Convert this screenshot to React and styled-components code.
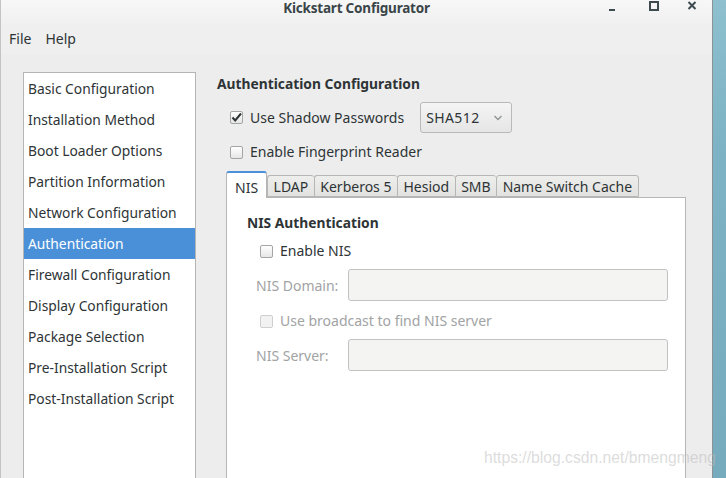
import React from 'react';
import styled, { createGlobalStyle } from 'styled-components';

const GlobalStyle = createGlobalStyle`
  html, body {
    margin: 0;
    padding: 0;
    width: 726px;
    height: 478px;
    overflow: hidden;
    font-family: "Noto Sans", "DejaVu Sans", sans-serif;
    color: #2e3436;
  }
`;

const sections = [
  'Basic Configuration',
  'Installation Method',
  'Boot Loader Options',
  'Partition Information',
  'Network Configuration',
  'Authentication',
  'Firewall Configuration',
  'Display Configuration',
  'Package Selection',
  'Pre-Installation Script',
  'Post-Installation Script',
];

const tabs = ['NIS', 'LDAP', 'Kerberos 5', 'Hesiod', 'SMB', 'Name Switch Cache'];

const Check = ({ checked, disabled }) => (
  <CheckBox disabled={ disabled }>
    { checked && (
      <svg width="13" height="13" viewBox="0 0 13 13">
        <path d="M2.5 6.5 L5.2 9.5 L11 2.5" fill="none" stroke="#2e3436" strokeWidth="2"/>
      </svg>
    ) }
  </CheckBox>
);

const App = () => {
  return ( <Screen>
    <GlobalStyle/>
    <Window>
      <TitleBar>
        <Title>Kickstart Configurator</Title>
        <Controls>
          <Minimize width="8" height="12" viewBox="0 0 8 12">
            <rect x="1" y="9" width="6" height="2" fill="#3d4a50"/>
          </Minimize>
          <svg width="10" height="12" viewBox="0 0 10 12">
            <rect x="1" y="2" width="8" height="8" fill="none" stroke="#3d4a50" strokeWidth="2"/>
          </svg>
          <svg width="10" height="12" viewBox="0 0 10 12">
            <path d="M1.5 2 L8.5 9 M8.5 2 L1.5 9" stroke="#3d4a50" strokeWidth="2"/>
          </svg>
        </Controls>
      </TitleBar>
      <MenuBar>
        <MenuItem>File</MenuItem>
        <MenuItem>Help</MenuItem>
      </MenuBar>
      <Body>
        <Sidebar>
          { sections.map( s => (
            <SideItem key={ s } selected={ s === 'Authentication' }>{ s }</SideItem>
          ) ) }
        </Sidebar>
        <Content>
          <Heading>Authentication Configuration</Heading>
          <ShadowRow>
            <CheckRow>
              <Check checked/>
              <span>Use Shadow Passwords</span>
            </CheckRow>
            <Combo>
              <span>SHA512</span>
              <svg width="10" height="8" viewBox="0 0 10 8">
                <path d="M1.5 2 L5 5.5 L8.5 2" fill="none" stroke="#8e9294" strokeWidth="1.3"/>
              </svg>
            </Combo>
          </ShadowRow>
          <FingerRow>
            <Check/>
            <span>Enable Fingerprint Reader</span>
          </FingerRow>
          <TabBar>
            { tabs.map( t => <Tab key={ t } active={ t === 'NIS' }>{ t }</Tab> ) }
          </TabBar>
          <Panel>
            <PanelHeading>NIS Authentication</PanelHeading>
            <NisToggle>
              <Check/>
              <span>Enable NIS</span>
            </NisToggle>
            <FieldRow>
              <FieldLabel>NIS Domain:</FieldLabel>
              <Field/>
            </FieldRow>
            <BroadcastRow>
              <Check disabled/>
              <span>Use broadcast to find NIS server</span>
            </BroadcastRow>
            <FieldRow>
              <FieldLabel>NIS Server:</FieldLabel>
              <Field/>
            </FieldRow>
          </Panel>
        </Content>
      </Body>
    </Window>
    <Desktop/>
    <Watermark>https://blog.csdn.net/bmengmeng</Watermark>
  </Screen> );
};

export default App;

const Screen = styled.div`
  position: relative;
  display: flex;
  width: 726px;
  height: 478px;
  overflow: hidden;
`;

const Window = styled.div`
  display: flex;
  flex-direction: column;
  width: 713px;
  height: 100%;
  background: #ededed;
  border-left: 1px solid #c4c4c4;
  border-right: 1px solid #8c9396;
  box-sizing: border-box;
`;

const Desktop = styled.div`
  flex: 1;
  background: linear-gradient(160deg, #8ec0cf 0%, #7db3c4 30%, #76aabd 100%);
`;

const TitleBar = styled.div`
  position: relative;
  height: 24px;
  padding-top: 1px;
  box-sizing: border-box;
  display: flex;
  justify-content: center;
  background: linear-gradient(#f7f7f7, #f0f0f0);
`;

const Title = styled.div`
  font-size: 13.5px;
  font-weight: bold;
  line-height: 14px;
  color: #3a4548;
  letter-spacing: -0.2px;
`;

const Controls = styled.div`
  position: absolute;
  top: 0;
  right: 15px;
  display: flex;
  gap: 28px;
  align-items: flex-start;
`;

const Minimize = styled.svg`
  margin-right: 5px;
`;

const MenuBar = styled.div`
  display: flex;
  height: 30px;
  padding-left: 8px;
  gap: 14px;
  background: #efefef;
`;

const MenuItem = styled.div`
  font-size: 14px;
  line-height: 30px;
`;

const Body = styled.div`
  flex: 1;
  display: flex;
  padding: 18px 0 0 22px;
  gap: 21px;
  min-height: 0;
`;

const Sidebar = styled.div`
  width: 173px;
  box-sizing: border-box;
  background: #ffffff;
  border: 1px solid #b5b5b3;
  border-bottom: none;
  flex-shrink: 0;
`;

const SideItem = styled.div`
  height: 31px;
  line-height: 31px;
  padding-left: 4px;
  font-size: 13.8px;
  white-space: nowrap;
  background: ${ props => props.selected ? '#4a90d9' : 'transparent' };
  color: ${ props => props.selected ? '#ffffff' : '#2e3436' };
`;

const Content = styled.div`
  flex: 1;
  display: flex;
  flex-direction: column;
  min-width: 0;
  padding-top: 1px;
`;

const Heading = styled.div`
  font-size: 13.8px;
  font-weight: bold;
  line-height: 22px;
`;

const CheckBox = styled.span`
  display: inline-flex;
  width: 13px;
  height: 13px;
  box-sizing: border-box;
  border: 1px solid ${ props => props.disabled ? '#cfcfcf' : '#a3a5a6' };
  border-radius: 2px;
  background: ${ props => props.disabled ? '#f2f2f2' : 'linear-gradient(#ffffff, #e6e6e6)' };
  margin-right: 7px;
  flex-shrink: 0;
  svg {
    margin: -1px;
  }
`;

const CheckRow = styled.div`
  display: flex;
  align-items: center;
  font-size: 14px;
  line-height: 22px;
`;

const ShadowRow = styled.div`
  display: flex;
  align-items: center;
  margin-top: 7px;
  padding-left: 13px;
  gap: 16px;
`;

const Combo = styled.div`
  display: flex;
  align-items: center;
  justify-content: space-between;
  width: 92px;
  height: 31px;
  box-sizing: border-box;
  padding: 0 8px 0 5px;
  border: 1px solid #b8b9b8;
  border-radius: 3px;
  background: linear-gradient(#f4f4f4, #e6e6e6);
  font-size: 14px;
  letter-spacing: 0.4px;
`;

const FingerRow = styled( CheckRow )`
  margin-top: 8px;
  padding-left: 13px;
`;

const TabBar = styled.div`
  display: flex;
  align-items: flex-end;
  height: 27px;
  margin: 7px 0 0 9px;
`;

const Tab = styled.div`
  height: ${ props => props.active ? '27px' : '22px' };
  line-height: ${ props => props.active ? '30px' : '21px' };
  box-sizing: border-box;
  padding: 0 ${ props => props.active ? '8px' : '5.5px' };
  font-size: 14px;
  border: 1px solid #b6b6b4;
  border-right: ${ props => props.active ? '1px solid #b6b6b4' : 'none' };
  border-top: ${ props => props.active ? '2px solid #4a90d9' : '1px solid #b6b6b4' };
  border-bottom: ${ props => props.active ? 'none' : '1px solid #b6b6b4' };
  border-radius: 3px 3px 0 0;
  background: ${ props => props.active ? '#ffffff' : 'linear-gradient(#eeeeec, #e2e2e0)' };
  position: relative;
  z-index: ${ props => props.active ? 1 : 0 };
  margin-bottom: ${ props => props.active ? '-1px' : '0' };
  &:last-child {
    border-right: 1px solid #b6b6b4;
  }
`;

const Panel = styled.div`
  flex: 1;
  width: 460px;
  margin-left: 9px;
  box-sizing: border-box;
  background: #ffffff;
  border: 1px solid #b6b6b4;
  border-bottom: none;
  padding: 15px 17px 0 20px;
  display: flex;
  flex-direction: column;
`;

const PanelHeading = styled( Heading )`
  line-height: 20px;
`;

const NisToggle = styled( CheckRow )`
  margin-top: 7px;
  padding-left: 13px;
`;

const BroadcastRow = styled( CheckRow )`
  margin-top: 9px;
  padding-left: 13px;
  color: #a1a3a4;
`;

const FieldRow = styled.div`
  display: flex;
  align-items: center;
  margin-top: 7px;
  padding-left: 9px;
`;

const FieldLabel = styled.div`
  width: 92px;
  font-size: 14px;
  color: #a1a3a4;
`;

const Field = styled.div`
  flex: 1;
  height: 32px;
  box-sizing: border-box;
  border: 1px solid #c2c2c0;
  border-radius: 3px;
  background: #f4f4f3;
`;

const Watermark = styled.div`
  position: absolute;
  left: 484px;
  top: 449px;
  font-family: "Liberation Sans", Arial, sans-serif;
  font-size: 15.7px;
  color: rgba(185, 185, 185, 0.5);
  white-space: nowrap;
`;
